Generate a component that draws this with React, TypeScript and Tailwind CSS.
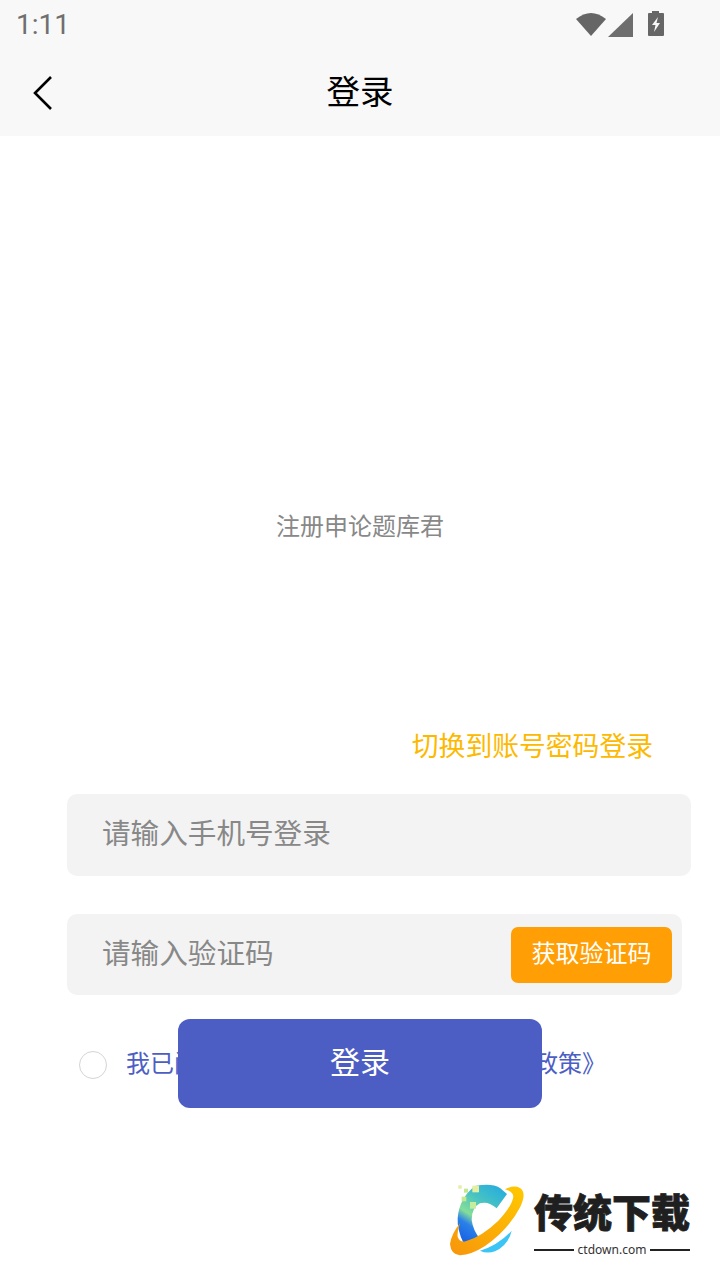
import React from 'react';

const cjk = { fontFamily: '"Noto Sans CJK SC", "Noto Sans", sans-serif' };

function StatusIcons() {
  return (
    <div className="flex items-start gap-[2px] mt-[11px] mr-[55px]">
      <svg width="30" height="26" viewBox="0 0 30 26">
        <path d="M0 8 Q15 -4 30 8 L15 25 Z" fill="#666666" />
      </svg>
      <svg width="26" height="26" viewBox="0 0 26 26" className="mt-[1px]">
        <path d="M0 25 L25 1 V25 Z" fill="#6e6e6e" />
      </svg>
      <svg width="18" height="26" viewBox="0 0 18 26" className="ml-[11px] -mt-[1px]">
        <path d="M5 1 H12 V3 H16 Q17 3 17 4 V25 Q17 26 16 26 H2 Q1 26 1 25 V4 Q1 3 2 3 H5 Z" fill="#666666" />
        <path d="M11 7 L5 15 H8.5 L7 22 L13 13 H9.5 Z" fill="#f8f8f8" />
      </svg>
    </div>
  );
}

function Logo() {
  return (
    <svg width="85" height="80" viewBox="0 0 255 240" className="shrink-0">
      <defs>
        <linearGradient id="ring" x1="0" y1="1" x2="1" y2="0">
          <stop offset="0" stopColor="#f7950c" />
          <stop offset="1" stopColor="#ffc800" />
        </linearGradient>
        <linearGradient id="arc" x1="0.75" y1="0" x2="0.2" y2="1">
          <stop offset="0" stopColor="#2aaedc" />
          <stop offset="0.3" stopColor="#45c2c4" />
          <stop offset="0.6" stopColor="#84de98" />
          <stop offset="0.75" stopColor="#2a80e8" />
          <stop offset="1" stopColor="#1a62e4" />
        </linearGradient>
      </defs>
      {/* the C */}
      <path d="M90 18 Q140 8 165 24 L186 42 L155 85 Q130 62 105 70 Q80 82 80 120 Q84 150 104 176 L56 190 Q36 150 38 115 Q42 55 90 18 Z" fill="url(#arc)" />
      {/* sliver under the orbit */}
      <path d="M200 152 Q190 195 150 214 Q125 222 105 212 Q160 195 200 152 Z" fill="#3cc4f4" />
      {/* orbit */}
      <path d="M45 130 Q36 155 38 170 Q44 188 62 184 Q110 170 160 122 Q200 80 205 50 Q204 34 180 28 Q206 14 225 24 Q246 38 226 80 Q190 150 120 198 Q80 224 45 226 Q18 224 15 192 Q20 160 45 130 Z" fill="url(#ring)" />
      {/* pixels */}
      <rect x="40" y="16" width="10" height="10" fill="#e5eda0" />
      <rect x="57" y="26" width="12" height="12" fill="#c7e78f" />
      <rect x="82" y="17" width="20" height="20" fill="#e6eea0" />
      <rect x="50" y="50" width="14" height="14" fill="#c6e88f" />
      <rect x="75" y="66" width="18" height="20" fill="#c8ec9e" />
    </svg>
  );
}

export default function App() {
  return (
    <main className="relative w-[720px] h-[1280px] bg-white overflow-hidden" style={cjk}>
      <header className="h-[136px] bg-[#f8f8f8]">
        <div className="flex justify-between h-[50px]">
          <span className="ml-[16px] mt-[7px] text-[28px] leading-[36px] text-[#6f6f6f]" style={{ fontFamily: 'Roboto, sans-serif' }}>1:11</span>
          <StatusIcons />
        </div>
        <div className="relative flex items-center justify-center h-[84px]">
          <svg width="22" height="36" viewBox="0 0 22 36" className="absolute left-[32px] top-[25px]">
            <path d="M19 2 L3 18 L19 34" fill="none" stroke="#000000" strokeWidth="2.6" />
          </svg>
          <h1 className="text-[33.5px] leading-[44px] pb-[4px] text-black">登录</h1>
        </div>
      </header>

      <p className="mt-[373px] text-center text-[24px] leading-[32px] text-[#888888]">注册申论题库君</p>

      <div className="mt-[186px] pr-[67px] text-right text-[26.8px] leading-[36px] text-[#fdb900]">切换到账号密码登录</div>

      <div className="mt-[31px] ml-[67px] w-[624px] h-[82px] rounded-[10px] bg-[#f3f3f3] flex items-center pl-[35px] pb-[6px] text-[28.6px] text-[#888888]">
        请输入手机号登录
      </div>

      <div className="mt-[38px] ml-[67px] w-[615px] h-[81px] rounded-[10px] bg-[#f3f3f3] flex items-center justify-between pl-[35px] pr-[10px] text-[28.6px] text-[#888888]">
        <span className="pb-[4px]">请输入验证码</span>
        <button className="w-[161px] h-[56px] rounded-[7px] bg-[#ff9f05] text-white text-[24px] pb-[5px]">获取验证码</button>
      </div>

      <div className="mt-[50px] ml-[79px] flex items-center gap-[19px] h-[40px]">
        <span className="w-[28px] h-[28px] rounded-full border-[1.5px] border-[#d4d4d4] bg-white" />
        <span className="text-[24px] leading-[32px] pb-[6px] text-[#4c5ec4]">我已阅读并同意《用户协议》和《隐私政策》</span>
      </div>

      {/* sits on top of the agreement row */}
      <button className="absolute left-[178px] top-[1019px] w-[364px] h-[89px] rounded-[12px] bg-[#4c5ec4] text-white text-[30px] pb-[6px]">登录</button>

      {/* watermark */}
      <div className="absolute left-[445px] top-[1180px] flex items-start">
        <Logo />
        <div className="ml-[4px] w-[156px]">
          <div className="text-[39px] leading-[54px] pt-[3px] font-black text-[#1f1f1f] whitespace-nowrap [-webkit-text-stroke:0.8px_#1f1f1f]">传统下载</div>
          <div className="flex items-center gap-[4px] mt-[5px]">
            <span className="h-[2px] flex-1 bg-[#222222]" />
            <span className="text-[12px] leading-[16px] text-[#333333]" style={{ fontFamily: '"Noto Sans", sans-serif' }}>ctdown.com</span>
            <span className="h-[2px] flex-1 bg-[#222222]" />
          </div>
        </div>
      </div>
    </main>
  );
}
